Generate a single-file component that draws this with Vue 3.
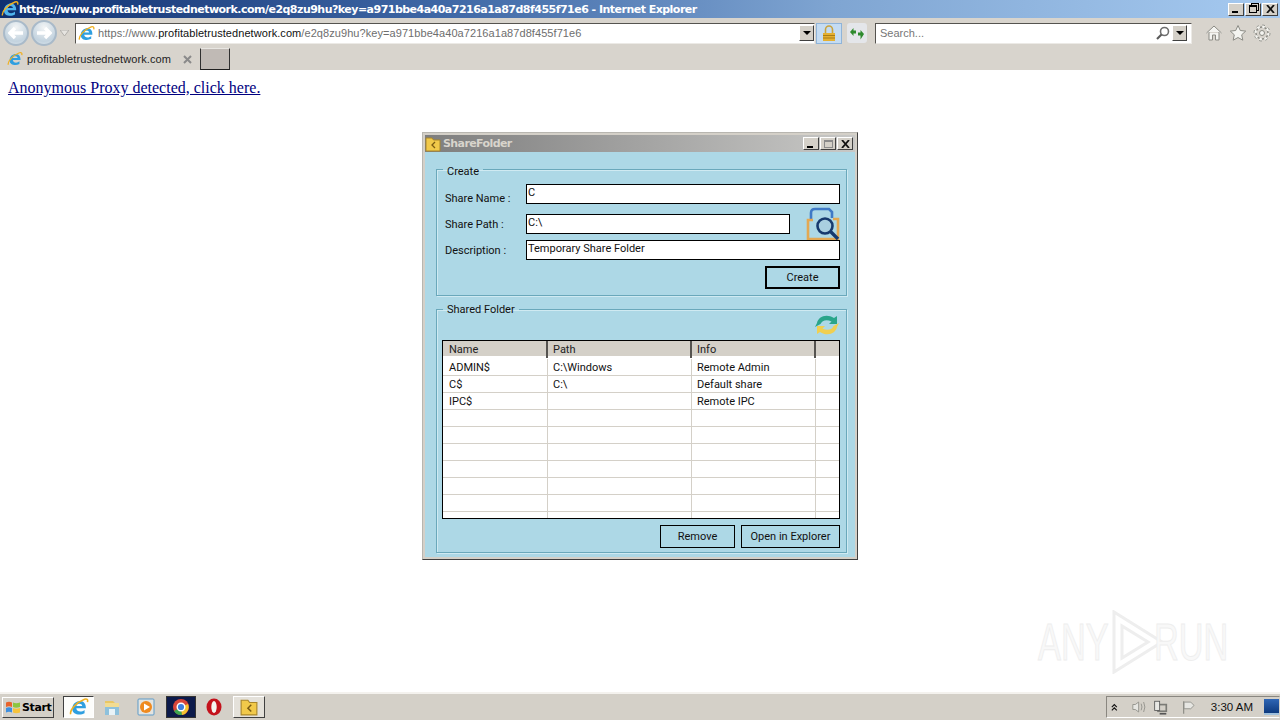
<script setup>
const shares = [
  { name: 'ADMIN$', path: 'C:\\Windows', info: 'Remote Admin' },
  { name: 'C$', path: 'C:\\', info: 'Default share' },
  { name: 'IPC$', path: '', info: 'Remote IPC' },
  { name: '', path: '', info: '' },
  { name: '', path: '', info: '' },
  { name: '', path: '', info: '' },
  { name: '', path: '', info: '' },
  { name: '', path: '', info: '' },
  { name: '', path: '', info: '' },
  { name: '', path: '', info: '' },
]
const pageUrl = 'https://www.profitabletrustednetwork.com/e2q8zu9hu?key=a971bbe4a40a7216a1a87d8f455f71e6'
</script>

<template>
  <div class="screen">
    <header class="ie-title">
      <svg class="ie-logo" width="18" height="18" viewBox="0 0 18 18">
        <path d="M3 10.500C3 6 6.500 3.500 10 3.500c3.600 0 5.400 3 5.200 6.700H6.600c.2 3.200 4.600 4 7.400 1.400v3c-4 2.400-11 1.300-11-3.600z M6.700 8h5.200c-.1-2.600-5-2.700-5.200 0z" fill="#4fb4ee" fill-rule="evenodd" />
        <path d="M1.500 15.500C.5 12 6 5 14 2c2-.7 3.300.2 2.600 2.600" fill="none" stroke="#f0b020" stroke-width="1.400" />
      </svg>
      <span class="ie-title-text">{{ pageUrl }} - Internet Explorer</span>
      <div class="caption-btns">
        <button class="cap"><i class="cap-min"></i></button>
        <button class="cap"><i class="cap-restore"></i></button>
        <button class="cap cap-close">
          <svg width="9" height="8" viewBox="0 0 9 8"><path d="M1 0l7 8M8 0L1 8" stroke="#111" stroke-width="1.800" /></svg>
        </button>
      </div>
    </header>

    <div class="toolbar">
      <div class="nav-circle">
        <svg width="16" height="14" viewBox="0 0 16 14"><path d="M7 2L2 7l5 5M3 7h12" fill="none" stroke="#fff" stroke-width="3.400" /></svg>
      </div>
      <div class="nav-circle nav-forward">
        <svg width="16" height="14" viewBox="0 0 16 14"><path d="M9 2l5 5-5 5M13 7H1" fill="none" stroke="#fff" stroke-width="3.400" /></svg>
      </div>
      <svg class="nav-drop" width="9" height="6" viewBox="0 0 9 6"><path d="M0 0h9L4.500 6z" fill="#e6e4e0" stroke="#b0aeaa" /></svg>

      <div class="address">
        <svg width="17" height="17" viewBox="0 0 18 18">
          <path d="M3 10.500C3 6 6.500 3.500 10 3.500c3.600 0 5.400 3 5.200 6.700H6.600c.2 3.200 4.600 4 7.400 1.400v3c-4 2.400-11 1.300-11-3.600z M6.700 8h5.200c-.1-2.600-5-2.700-5.200 0z" fill="#2f9fe0" fill-rule="evenodd" />
          <path d="M1.500 15.500C.5 12 6 5 14 2c2-.7 3.300.2 2.600 2.600" fill="none" stroke="#f0b020" stroke-width="1.400" />
        </svg>
        <span class="url"><span class="dim">https://www.</span><span class="host">profitabletrustednetwork.com</span><span class="dim">/e2q8zu9hu?key=a971bbe4a40a7216a1a87d8f455f71e6</span></span>
        <span class="combo-arrow"><i></i></span>
      </div>
      <div class="lock-btn">
        <svg width="14" height="17" viewBox="0 0 14 17">
          <path d="M3.500 8V4.500a3.500 3.500 0 0 1 7 0V8" fill="none" stroke="#c9a33c" stroke-width="1.600" />
          <rect x="1" y="8" width="12" height="8" fill="#e5b030" />
          <path d="M1 10.500h12M1 13h12" stroke="#a87d16" />
        </svg>
      </div>
      <div class="compat-btn">
        <svg width="16" height="13" viewBox="0 0 16 13">
          <path d="M1 5l3.500-4v2.500H7v3H4.500V9z" fill="#2d8a2d" />
          <path d="M15 7l-3.500-4v2.500H9v3h2.500v4z" fill="#2d8a2d" />
        </svg>
      </div>
      <div class="search">
        <span class="search-text">Search...</span>
        <svg class="search-icon" width="14" height="14" viewBox="0 0 14 14">
          <circle cx="8.500" cy="5.500" r="4" fill="none" stroke="#6d6d6d" stroke-width="1.600" />
          <path d="M5.500 8.500L1 13" stroke="#5a5a5a" stroke-width="2.200" />
        </svg>
        <span class="combo-arrow"><i></i></span>
      </div>
      <div class="tools">
        <svg width="18" height="18" viewBox="0 0 18 18"><path d="M1.500 9L9 2l7.500 7M4 8v8h3.500v-5h3v5H14V8" fill="#f4f4f0" stroke="#8b8b85" stroke-linejoin="round" /></svg>
        <svg width="18" height="18" viewBox="0 0 18 18"><path d="M9 1.500l2.300 5 5.400.6-4 3.700 1.100 5.400L9 13.500l-4.800 2.700 1.100-5.400-4-3.700 5.400-.6z" fill="#f4f4f0" stroke="#8b8b85" stroke-linejoin="round" /></svg>
        <svg width="18" height="18" viewBox="0 0 18 18">
          <circle cx="9" cy="9" r="6" fill="none" stroke="#8b8b85" stroke-width="1.400" />
          <circle cx="9" cy="9" r="6.800" fill="none" stroke="#f4f4f0" stroke-width="3" stroke-dasharray="2.700 2.640" />
          <circle cx="9" cy="9" r="8" fill="none" stroke="#8b8b85" stroke-width="1" stroke-dasharray="2.800 3.480" />
          <circle cx="9" cy="9" r="2.500" fill="#f4f4f0" stroke="#8b8b85" />
        </svg>
      </div>
    </div>

    <div class="tabs">
      <div class="tab">
        <svg width="16" height="16" viewBox="0 0 18 18">
          <path d="M3 10.500C3 6 6.500 3.500 10 3.500c3.600 0 5.400 3 5.200 6.700H6.600c.2 3.200 4.600 4 7.400 1.400v3c-4 2.400-11 1.300-11-3.600z M6.700 8h5.200c-.1-2.600-5-2.700-5.200 0z" fill="#2f9fe0" fill-rule="evenodd" />
          <path d="M1.500 15.500C.5 12 6 5 14 2c2-.7 3.300.2 2.600 2.600" fill="none" stroke="#f0b020" stroke-width="1.400" />
        </svg>
        <span class="tab-text">profitabletrustednetwork.com</span>
        <svg class="tab-x" width="9" height="9" viewBox="0 0 9 9"><path d="M1 1l7 7M8 1L1 8" stroke="#8a8a8a" stroke-width="2" /></svg>
      </div>
      <div class="new-tab"></div>
    </div>

    <main class="page">
      <a class="proxy-link" href="#">Anonymous Proxy detected, click here.</a>

      <section class="dialog">
        <div class="dlg-title">
          <svg width="16" height="16" viewBox="0 0 16 16">
            <path d="M1 2h6l1.500 2H15v11H1z" fill="#f1c94a" stroke="#a9862a" />
            <path d="M10 6L7 9l3 3" fill="none" stroke="#7a5b12" stroke-width="1.300" />
          </svg>
          <span class="dlg-title-text">ShareFolder</span>
          <div class="dlg-btns">
            <button class="cap"><i class="cap-min"></i></button>
            <button class="cap"><i class="cap-max"></i></button>
            <button class="cap cap-close">
              <svg width="9" height="8" viewBox="0 0 9 8"><path d="M1 0l7 8M8 0L1 8" stroke="#111" stroke-width="1.800" /></svg>
            </button>
          </div>
        </div>

        <div class="dlg-body">
          <fieldset class="group group-create">
            <legend>Create</legend>
            <div class="form-row row-name">
              <label>Share Name :</label>
              <div class="field field-wide">C</div>
            </div>
            <div class="form-row row-path">
              <label>Share Path :</label>
              <div class="field field-path">C:\</div>
              <svg class="browse" width="34" height="34" viewBox="0 0 34 34">
                <path d="M5 13V6q0-4 4-4h14l3 3v6" fill="none" stroke="#3f79c6" stroke-width="2.600" />
                <path d="M7 13H2v19h30V12h-5" fill="none" stroke="#e3a853" stroke-width="2.600" />
                <circle cx="19" cy="19" r="7.500" fill="#a9cfe0" stroke="#173a6e" stroke-width="2.600" />
                <path d="M24.500 24.500L32 32" stroke="#173a6e" stroke-width="3.400" />
              </svg>
            </div>
            <div class="form-row row-desc">
              <label>Description :</label>
              <div class="field field-wide">Temporary Share Folder</div>
            </div>
            <div class="create-row">
              <button class="win-btn win-btn-default">Create</button>
            </div>
          </fieldset>

          <fieldset class="group group-shared">
            <legend>Shared Folder</legend>
            <div class="refresh-row">
              <svg width="26" height="26" viewBox="0 0 26 26">
                <path d="M3 11C4 5 12 1 20 6l3-2v8h-8l2.500-2.500C13 7 8 8 6.500 12L1 15z" fill="#2aa58a" />
                <path d="M23 15c-1 6-9 10-17 5l-3 2v-8h8l-2.500 2.500C13 19 18 18 19.500 14L25 11z" fill="#f0cf50" />
              </svg>
            </div>
            <div class="list">
              <div class="list-head">
                <span>Name</span>
                <span>Path</span>
                <span>Info</span>
                <span></span>
              </div>
              <div class="list-body">
                <div v-for="(row, i) in shares" :key="i" class="list-row">
                  <span>{{ row.name }}</span>
                  <span>{{ row.path }}</span>
                  <span>{{ row.info }}</span>
                  <span></span>
                </div>
              </div>
            </div>
            <div class="list-actions">
              <button class="win-btn btn-remove">Remove</button>
              <button class="win-btn btn-open">Open in Explorer</button>
            </div>
          </fieldset>
        </div>
      </section>

      <div class="watermark">
        <span class="wm-text">ANY</span>
        <svg class="wm-logo" width="58" height="64" viewBox="0 0 58 64">
          <path d="M6 2v60l48-30z M14 16v32l26-16z" fill="none" stroke="#eeeeee" stroke-width="3" />
        </svg>
        <span class="wm-text">RUN</span>
      </div>
    </main>

    <footer class="taskbar">
      <button class="start">
        <svg width="16" height="15" viewBox="0 0 16 15">
          <path d="M1 2.500q3-1.500 6 0V7Q4 5.500 1 7z" fill="#e8632c" />
          <path d="M8 2.500q3 1.500 7 0V7q-4 1.500-7 0z" fill="#8cc63f" />
          <path d="M1 8q3-1.500 6 0v4.500q-3-1.500-6 0z" fill="#3d8fe0" />
          <path d="M8 8q3 1.500 7 0v4.500q-4 1.500-7 0z" fill="#f6c33b" />
        </svg>
        <span>Start</span>
      </button>
      <div class="task task-ie">
        <svg width="20" height="20" viewBox="0 0 18 18">
          <path d="M3 10.500C3 6 6.500 3.500 10 3.500c3.600 0 5.400 3 5.200 6.700H6.600c.2 3.200 4.600 4 7.400 1.400v3c-4 2.400-11 1.300-11-3.600z M6.700 8h5.200c-.1-2.600-5-2.700-5.200 0z" fill="#2f9fe0" fill-rule="evenodd" />
          <path d="M1.500 15.500C.5 12 6 5 14 2c2-.7 3.300.2 2.600 2.600" fill="none" stroke="#f0b020" stroke-width="1.400" />
        </svg>
      </div>
      <div class="task task-explorer">
        <svg width="18" height="18" viewBox="0 0 18 18">
          <path d="M2 5V3h8l2 2z" fill="#e9c765" />
          <rect x="2" y="5" width="14" height="12" fill="#8ec1dc" />
          <rect x="2" y="5" width="14" height="4" fill="#f2dc92" />
          <rect x="6" y="11" width="6" height="6" fill="#e9f3f7" />
        </svg>
      </div>
      <div class="task task-wmp">
        <svg width="18" height="18" viewBox="0 0 18 18">
          <rect x="1" y="1" width="16" height="16" rx="1" fill="#e4e4e0" stroke="#5d9bc9" />
          <circle cx="9" cy="9" r="6" fill="#ef8a1f" />
          <path d="M7 5.500L13 9l-6 3.500z" fill="#fff" />
        </svg>
      </div>
      <div class="task task-chrome">
        <svg width="18" height="18" viewBox="0 0 18 18">
          <circle cx="9" cy="9" r="8" fill="#d8453a" />
          <path d="M9 9L2 13a8 8 0 0 0 8 4z" fill="#3ca650" />
          <path d="M9 9l7-3a8 8 0 0 1-6 11z" fill="#f4c430" />
          <circle cx="9" cy="9" r="3.800" fill="#3f7fe0" stroke="#fff" stroke-width="1.400" />
        </svg>
      </div>
      <div class="task task-opera">
        <svg width="16" height="18" viewBox="0 0 16 18">
          <ellipse cx="8" cy="9" rx="7.500" ry="8.500" fill="#c4121c" />
          <ellipse cx="8" cy="9" rx="2.700" ry="6" fill="#f4f4f0" />
        </svg>
      </div>
      <div class="task task-share">
        <svg width="18" height="18" viewBox="0 0 16 16">
          <path d="M1 2h6l1.500 2H15v11H1z" fill="#f1c94a" stroke="#a9862a" />
          <path d="M10 6L7 9l3 3" fill="none" stroke="#7a5b12" stroke-width="1.300" />
        </svg>
      </div>

      <div class="tray">
        <svg width="8" height="9" viewBox="0 0 8 9"><path d="M1 4l3-3 3 3M1 8l3-3 3 3" fill="none" stroke="#111" stroke-width="1.400" /></svg>
        <svg class="tray-speaker" width="18" height="16" viewBox="0 0 18 16">
          <path d="M1 5h3l4-3v12l-4-3H1z" fill="#e6e6e2" stroke="#8b8b85" />
          <path d="M11 4q2 4 0 8M14 2q3 6 0 12" fill="none" stroke="#8b8b85" />
        </svg>
        <svg width="18" height="17" viewBox="0 0 18 17">
          <rect x="5" y="4" width="12" height="10" fill="#7b7b76" />
          <rect x="7" y="6" width="8" height="6" fill="#d4d0c8" />
          <path d="M8 16h8" stroke="#555" stroke-width="2" />
          <rect x="2" y="1" width="6" height="11" fill="#e8e8e4" stroke="#555" />
        </svg>
        <svg class="tray-flag" width="16" height="17" viewBox="0 0 16 17">
          <path d="M2 1v15" stroke="#8b8b85" stroke-width="1.400" />
          <path d="M2.500 2h8l4 4-4 4h-8z" fill="#e6e6e2" stroke="#8b8b85" />
        </svg>
        <span class="clock">3:30 AM</span>
        <div class="show-desktop"></div>
      </div>
    </footer>
  </div>
</template>

<style>
html,
body {
  margin: 0;
  background: #fff;
}
</style>

<style scoped>
.screen {
  width: 1280px;
  height: 720px;
  display: flex;
  flex-direction: column;
  overflow: hidden;
  font-family: "Liberation Sans", Arial, sans-serif;
  font-size: 12px;
  color: #000;
  background: #fff;
}

button {
  font-family: inherit;
  padding: 0;
}

/* ie chrome */
.ie-title {
  height: 18px;
  display: flex;
  align-items: center;
  background: linear-gradient(90deg, #0f2f70 0%, #3f68a6 35%, #7fa5d2 65%, #a6caf0 100%);
}

.ie-logo {
  margin-left: 1px;
}

.ie-title-text {
  color: #fff;
  font-family: "DejaVu Sans", sans-serif;
  font-weight: 700;
  font-size: 11px;
  letter-spacing: -0.52px;
  white-space: nowrap;
}

.caption-btns {
  margin-left: auto;
  margin-right: 2px;
  display: flex;
  gap: 1px;
}

.cap {
  width: 16px;
  height: 13px;
  display: flex;
  align-items: center;
  justify-content: center;
  position: relative;
  background: #d4d0c8;
  border: 1px solid;
  border-color: #fff #404040 #404040 #fff;
  box-sizing: border-box;
}

.cap i {
  display: block;
  box-sizing: border-box;
}

.cap-min {
  width: 6px;
  height: 2px;
  background: #000;
  margin-top: 6px;
  margin-right: 2px;
}

.cap-max {
  width: 9px;
  height: 8px;
  border: 1px solid #8a8a8a;
  border-top-width: 2px;
}

.cap-restore {
  width: 8px;
  height: 8px;
  border: 1px solid #000;
  border-top-width: 2px;
  box-shadow: 2px -2px 0 -1px #d4d0c8, 2px -2px 0 0 #000;
}

.toolbar {
  height: 30px;
  display: flex;
  align-items: center;
  background: #d8d4cd;
}

.nav-circle {
  width: 26px;
  height: 26px;
  margin-left: 3px;
  border-radius: 50%;
  display: flex;
  align-items: center;
  justify-content: center;
  background: radial-gradient(circle at 50% 25%, #f2f4f5, #c3d3df 70%, #dfe8ee);
  border: 2px solid #a9bac9;
  box-sizing: border-box;
}

.nav-forward {
  margin-left: 2px;
}

.nav-drop {
  margin-left: 3px;
}

.address {
  width: 740px;
  height: 21px;
  margin-left: 6px;
  display: flex;
  align-items: center;
  background: #fff;
  border: 1px solid;
  border-color: #55534f #eceae6 #eceae6 #55534f;
  box-sizing: border-box;
  padding-left: 2px;
}

.url {
  margin-left: 3px;
  font-size: 11px;
  letter-spacing: 0.07px;
  white-space: nowrap;
}

.dim {
  color: #6e6e6e;
}

.host {
  color: #111;
}

.combo-arrow {
  margin-left: auto;
  width: 15px;
  height: 16px;
  display: flex;
  align-items: center;
  justify-content: center;
  background: #d4d0c8;
  border: 1px solid;
  border-color: #fff #404040 #404040 #fff;
  box-sizing: border-box;
}

.combo-arrow i {
  width: 0;
  height: 0;
  border-left: 4px solid transparent;
  border-right: 4px solid transparent;
  border-top: 4px solid #000;
}

.lock-btn {
  width: 26px;
  height: 21px;
  margin-left: 1px;
  display: flex;
  align-items: center;
  justify-content: center;
  background: #c5dcf2;
  border: 1px solid #8fb4d9;
  box-sizing: border-box;
}

.compat-btn {
  width: 20px;
  height: 20px;
  margin-left: 5px;
  display: flex;
  align-items: center;
  justify-content: center;
  background: #e4e6ea;
  border-radius: 3px;
}

.search {
  width: 317px;
  height: 21px;
  margin-left: 8px;
  display: flex;
  align-items: center;
  background: #fff;
  border: 1px solid;
  border-color: #55534f #eceae6 #eceae6 #55534f;
  box-sizing: border-box;
}

.search-text {
  margin-left: 4px;
  color: #777;
  font-size: 11px;
}

.search-icon {
  margin-left: auto;
  margin-right: 2px;
}

.search .combo-arrow {
  margin-left: 0;
  margin-right: 4px;
}

.tools {
  margin-left: 13px;
  display: flex;
  gap: 6px;
}

.tabs {
  height: 22px;
  display: flex;
  align-items: stretch;
  background: #d8d4cd;
}

.tab {
  width: 198px;
  box-sizing: border-box;
  display: flex;
  align-items: center;
  padding-left: 7px;
}

.tab-text {
  margin-left: 4px;
  font-size: 11px;
  letter-spacing: 0.1px;
  color: #222;
  white-space: nowrap;
}

.tab-x {
  margin-left: auto;
  margin-right: 6px;
}

.new-tab {
  width: 30px;
  margin-left: 2px;
  background: #c0bab5;
  border: 1px solid;
  border-color: #e8e6e2 #303030 #202020 #303030;
  box-sizing: border-box;
}

/* page */
.page {
  flex: 1;
  position: relative;
  padding: 9px 0 0;
  background: #fff;
}

.proxy-link {
  display: block;
  width: max-content;
  margin-left: 8px;
  font-family: "Liberation Serif", "Times New Roman", serif;
  font-size: 16px;
  line-height: 18px;
  color: #000080;
}

.dialog {
  width: 436px;
  height: 428px;
  margin: 35px auto 0;
  display: flex;
  flex-direction: column;
  box-sizing: border-box;
  padding: 2px;
  background: #d4d0c8;
  border: 1px solid;
  border-color: #b8b6b0 #404040 #404040 #b8b6b0;
  font-family: Roboto, "Liberation Sans", sans-serif;
  font-size: 11px;
}

.dlg-title {
  height: 17px;
  flex-shrink: 0;
  display: flex;
  align-items: center;
  background: linear-gradient(90deg, #7e7e7e, #c8c8c6);
}

.dlg-title-text {
  margin-left: 2px;
  color: #d8d4cc;
  font-family: "DejaVu Sans", sans-serif;
  font-weight: 700;
  font-size: 11px;
  letter-spacing: -0.6px;
}

.dlg-btns {
  margin-left: auto;
  margin-right: 2px;
  display: flex;
  gap: 1px;
}

.dlg-body {
  flex: 1;
  background: #add8e6;
  padding: 0 8px 0 11px;
  display: flex;
  flex-direction: column;
}

.group {
  margin: 0;
  padding: 0;
  min-width: 0;
  box-sizing: border-box;
  border: 1px solid #6aa8bb;
  box-shadow: inset 1px 1px 0 #cfeaf2, 1px 1px 0 #cfeaf2;
}

.group legend {
  position: relative;
  margin-left: 6px;
  padding: 0 4px;
  line-height: 14px;
  color: #111;
}

.group-create {
  height: 134px;
  margin-top: 10px;
}

.group-create legend {
  top: 3px;
}

.group-shared {
  height: 251px;
  margin-top: 6px;
}

.group-shared legend {
  top: 1px;
}

.form-row {
  height: 20px;
  display: flex;
  align-items: center;
  padding-left: 8px;
}

.form-row label {
  width: 81px;
  flex-shrink: 0;
  color: #111;
}

.row-name {
  margin-top: 8px;
}

.row-name label {
  padding-top: 8px;
}

.row-path {
  margin-top: 10px;
}

.row-desc {
  margin-top: 6px;
}

.field {
  height: 20px;
  box-sizing: border-box;
  background: #fff;
  border: 1px solid #000;
  padding-left: 1px;
  line-height: 16px;
  color: #111;
}

.field-wide {
  width: 314px;
}

.field-path {
  width: 264px;
}

.browse {
  flex-shrink: 0;
  margin-left: 16px;
}

.create-row {
  display: flex;
  justify-content: flex-end;
  padding-right: 6px;
  margin-top: 6px;
}

.win-btn {
  height: 23px;
  font-family: Roboto, "Liberation Sans", sans-serif;
  font-size: 11px;
  color: #111;
  background: #add8e6;
  border: 1px solid #000;
  box-sizing: border-box;
}

.win-btn-default {
  width: 75px;
  border-width: 2px;
}

.refresh-row {
  height: 26px;
  display: flex;
  justify-content: flex-end;
  padding-right: 6px;
  margin-top: -4px;
}

.list {
  width: 398px;
  height: 179px;
  margin: 2px 0 0 5px;
  overflow: hidden;
  box-sizing: border-box;
  background: #fff;
  border: 1px solid #000;
}

.list-head,
.list-row {
  display: grid;
  grid-template-columns: 105px 144px 124px 1fr;
  box-sizing: border-box;
}

.list-head {
  height: 15px;
  line-height: 17px;
  background: #d4d0c8;
}

.list-head span {
  padding-left: 6px;
  border-right: 2px solid #55534f;
  color: #222;
}

.list-head span:nth-child(n + 2) {
  padding-left: 5px;
}

.list-head span:last-child {
  border-right: none;
}

.list-body {
  padding-top: 3px;
}

.list-row {
  height: 17px;
  line-height: 17px;
  border-bottom: 1px solid #d4d0c8;
}

.list-row span {
  padding-left: 6px;
  border-right: 1px solid #d4d0c8;
  color: #111;
}

.list-row span:nth-child(n + 2) {
  padding-left: 5px;
}

.list-row span:last-child {
  border-right: none;
}

.list-actions {
  display: flex;
  justify-content: flex-end;
  gap: 6px;
  padding-right: 6px;
  margin-top: 6px;
}

.btn-remove {
  width: 75px;
}

.btn-open {
  width: 99px;
}

.watermark {
  position: absolute;
  left: 1038px;
  top: 540px;
  display: flex;
  align-items: center;
  pointer-events: none;
}

.wm-text {
  display: inline-block;
  width: 74px;
  font-family: "Liberation Sans", sans-serif;
  font-size: 52px;
  line-height: 64px;
  color: #f8f8f8;
  -webkit-text-stroke: 1px #eeeeee;
  transform: scaleX(0.66);
  transform-origin: left center;
  white-space: nowrap;
}

.wm-logo {
  margin: 0 -12px 0 -4px;
}

/* taskbar */
.taskbar {
  height: 28px;
  display: flex;
  align-items: center;
  box-sizing: border-box;
  background: #d4d0c8;
  border-top: 2px solid #f4f2ee;
}

.start {
  width: 52px;
  height: 21px;
  margin-left: 2px;
  display: flex;
  align-items: center;
  gap: 1px;
  padding-left: 2px;
  background: #d4d0c8;
  border: 1px solid;
  border-color: #fff #404040 #404040 #fff;
  box-sizing: border-box;
  font-family: "DejaVu Sans", sans-serif;
  font-weight: 700;
  font-size: 11px;
  letter-spacing: -0.4px;
  color: #000;
}

.task {
  height: 22px;
  display: flex;
  align-items: center;
  justify-content: center;
  box-sizing: border-box;
}

.task-ie {
  width: 31px;
  margin-left: 9px;
  background: #fdfdfb;
  border: 1px solid;
  border-color: #404040 #fff #fff #404040;
}

.task-explorer {
  width: 30px;
  margin-left: 3px;
}

.task-wmp {
  width: 30px;
  margin-left: 4px;
}

.task-chrome {
  width: 30px;
  margin-left: 5px;
  background: #0c1a4a;
  border: 1px solid #333;
}

.task-opera {
  width: 30px;
  margin-left: 3px;
}

.task-share {
  width: 32px;
  margin-left: 4px;
  background: #e4e1da;
  border: 1px solid;
  border-color: #fff #404040 #404040 #fff;
}

.tray {
  margin-left: auto;
  width: 174px;
  height: 22px;
  display: flex;
  align-items: center;
  box-sizing: border-box;
  padding-left: 4px;
  gap: 6px;
  border: 1px solid;
  border-color: #8a8780 transparent #fff #8a8780;
}

.tray-speaker {
  margin-left: 8px;
}

.tray-flag {
  margin-left: 8px;
}

.clock {
  margin-left: 10px;
  font-size: 11.500px;
  color: #111;
  white-space: nowrap;
}

.show-desktop {
  width: 18px;
  height: 14px;
  margin-left: 5px;
  background: linear-gradient(180deg, #2f66b5, #0e3a7e);
  border-bottom: 2px solid #9fc0dc;
}
</style>
